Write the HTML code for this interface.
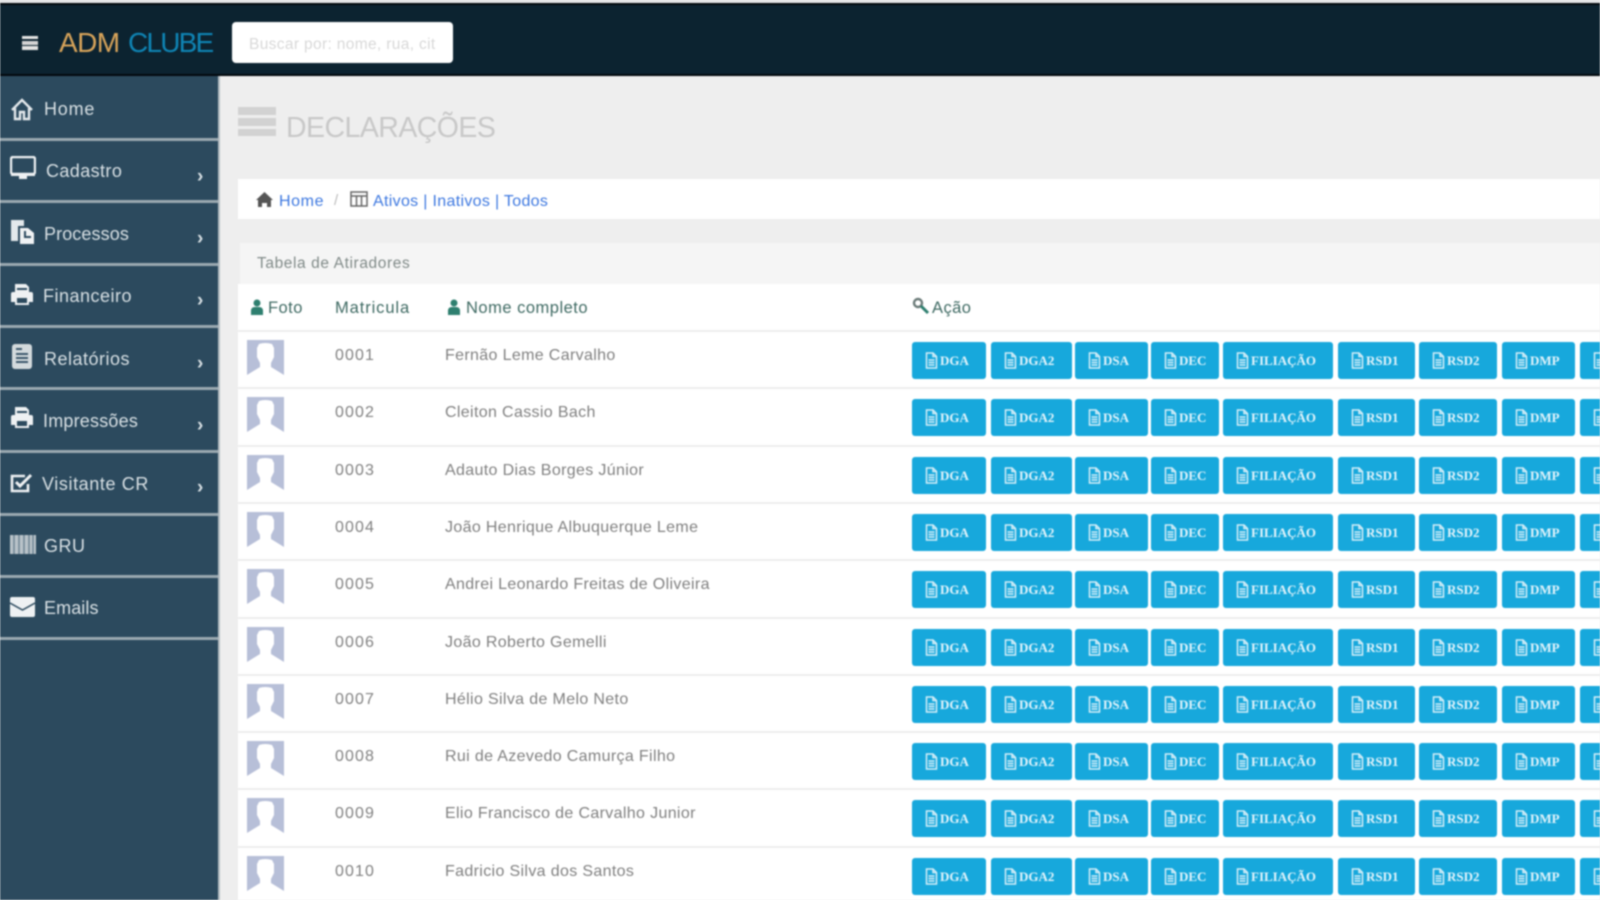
<!DOCTYPE html>
<html lang="pt"><head><meta charset="utf-8"><title>Declarações</title>
<style>
*{box-sizing:border-box}
html,body{margin:0;padding:0;width:1600px;height:900px;overflow:hidden;background:#eee}
#p{position:relative;width:1600px;height:900px;overflow:hidden;font-family:"Liberation Sans",sans-serif;filter:blur(.8px);background:#eee}
.a{position:absolute;white-space:nowrap}
#top{left:0;top:3px;width:1600px;height:73px;background:#0c2330;border-top:2px solid #02090e;border-bottom:2px solid #02090e}
#side{left:0;top:76px;width:220px;height:824px;background:#2c4a5e;border-right:2px solid #b4bdc2}
.d{position:absolute;left:0;width:218px;height:3px;background:#9aa8b0}
.m{position:absolute;color:#d8e0e4;font-size:18px;line-height:22px}
.ch{position:absolute;left:197px;color:#d8e0e4;font-size:19px;font-weight:bold;line-height:16px}
.ic{position:absolute;left:10px}
#crumb{left:238px;top:179px;width:1362px;height:40px;background:#fff}
#ph{left:240px;top:243px;width:1360px;height:41px;background:#f5f5f5}
#tb{left:238px;top:284px;width:1362px;height:616px;background:#fff}
.h{position:absolute;top:297px;font-size:16.5px;line-height:22px;color:#3f6a63;letter-spacing:.45px}
.r{position:absolute;left:238px;width:1362px;height:57px;border-top:2px solid #eee}
.r svg.av{position:absolute;left:9px;top:8px;width:37px;height:35px}
.r .n,.r .t{position:absolute;top:14px;font-size:16px;line-height:20px;color:#808080;white-space:nowrap;letter-spacing:.35px}
.r .n{left:97px;letter-spacing:1.1px}.r .t{left:207px}
.r b{position:absolute;top:10px;height:37px;background:#17a8dc;border-radius:3px;color:#e4f4fb;font:bold 13px/37px "Liberation Serif",serif;text-align:left;white-space:nowrap;overflow:hidden;padding-left:13px}
.r b svg{width:13px;height:17px;vertical-align:-4px;margin-right:2px}
.r b:nth-of-type(1){left:674px;width:74px}
.r b:nth-of-type(2){left:753px;width:81px}
.r b:nth-of-type(3){left:837px;width:73px}
.r b:nth-of-type(4){left:913px;width:68px}
.r b:nth-of-type(5){left:985px;width:110px}
.r b:nth-of-type(6){left:1100px;width:77px}
.r b:nth-of-type(7){left:1181px;width:78px}
.r b:nth-of-type(8){left:1264px;width:73px}
.r b:nth-of-type(9){left:1342px;width:40px}
a{color:#3d78e0;text-decoration:none}
</style></head><body>
<svg width="0" height="0" style="position:absolute"><defs>
<symbol id="av" viewBox="0 0 37 35"><rect width="37" height="35" fill="#b7bfd8"/><path d="M12 4Q18 2 25 4L27 8V17L24 23V27L37 35H0L13 27V23L10 17V8Z" fill="#fff"/></symbol>
<symbol id="dc" viewBox="0 0 13 17"><path d="M1.5 1h6.5l3.500 3.500V16h-10zM8 1v3.500h3.500M3.500 8h6M3.500 10.500h6M3.500 13h6" fill="none" stroke="#d6eef8" stroke-width="1.500"/></symbol>
<symbol id="pr" viewBox="0 0 14 16"><circle cx="7" cy="4" r="3.500" fill="#2e7f6f"/><path d="M1 16v-4q0-4 4-4h4q4 0 4 4v4z" fill="#2e7f6f"/></symbol>
</defs></svg>
<div id="p">
<div class="a" style="left:0;top:0;width:1600px;height:3px;background:#e4e6e7"></div>
<div class="a" id="top"></div>
<div class="a" style="left:22px;top:36px;width:16px;height:3px;background:#e4e4e4"></div>
<div class="a" style="left:22px;top:41px;width:16px;height:4px;background:#d4d4d4"></div>
<div class="a" style="left:22px;top:46px;width:16px;height:4px;background:#e4e4e4"></div>
<div class="a" style="left:59px;top:26px;font-size:28px;line-height:34px;letter-spacing:-.6px;color:#d8a45a">ADM</div>
<div class="a" style="left:128px;top:26px;font-size:28px;line-height:34px;letter-spacing:-1.8px;color:#0f84b4">CLUBE</div>
<div class="a" style="left:232px;top:22px;width:221px;height:41px;background:#fff;border-radius:4px"></div>
<div class="a" style="left:249px;top:35px;font-size:15.5px;line-height:20px;color:#d8d8d8;letter-spacing:.35px">Buscar por: nome, rua, cit</div>

<div class="a" id="side">
<div class="d" style="top:62px"></div><div class="d" style="top:124px"></div><div class="d" style="top:187px"></div><div class="d" style="top:249px"></div><div class="d" style="top:311px"></div><div class="d" style="top:374px"></div><div class="d" style="top:437px"></div><div class="d" style="top:499px"></div><div class="d" style="top:561px"></div>

<svg class="ic" style="top:21px" width="24" height="24" viewBox="0 0 24 24"><path d="M2 13L12 3l10 10M5 11v11h5v-7h4v7h5V11" fill="none" stroke="#e4e9ec" stroke-width="2.400"/></svg>
<div class="m" style="left:44px;top:22px;letter-spacing:.8px">Home</div>

<svg class="ic" style="top:80px" width="26" height="24" viewBox="0 0 26 24"><rect x="1" y="1" width="24" height="17" rx="2" fill="none" stroke="#eef1f3" stroke-width="2.400"/><path d="M1 17h24v3H1zM9 20h8v3H9z" fill="#eef1f3"/></svg>
<div class="m" style="left:46px;top:84px;letter-spacing:.4px">Cadastro</div><div class="ch" style="top:93px">›</div>

<svg class="ic" style="top:142px" width="26" height="27" viewBox="0 0 26 27"><path d="M1 2h13v6H8v15H1z" fill="#e4e9ec"/><path d="M10 10h8l6 5v11H10z" fill="#f0f2f4"/><path d="M15 13v6h6" fill="none" stroke="#2c4a5e" stroke-width="2"/></svg>
<div class="m" style="left:44px;top:147px;letter-spacing:.1px">Processos</div><div class="ch" style="top:155px">›</div>

<svg class="ic" style="top:206px" width="24" height="24" viewBox="0 0 24 24"><path d="M5 10V2h11l3 3v5h2q2 0 2 2v8h-4v3H5v-3H1v-8q0-2 2-2z" fill="#eef1f3"/><path d="M7 16h10v5H7z" fill="#2c4a5e"/><path d="M7 7h10" stroke="#2c4a5e" stroke-width="2"/></svg>
<div class="m" style="left:43px;top:209px;letter-spacing:.5px">Financeiro</div><div class="ch" style="top:217px">›</div>

<svg class="ic" style="top:267px" width="24" height="27" viewBox="0 0 24 27"><rect x="2" y="1" width="20" height="25" rx="3" fill="#d3dadd"/><path d="M6 6h6M6 11h12M6 15h12M6 19h12" stroke="#3a5669" stroke-width="2"/></svg>
<div class="m" style="left:44px;top:272px;letter-spacing:.5px">Relatórios</div><div class="ch" style="top:280px">›</div>

<svg class="ic" style="top:329px" width="24" height="24" viewBox="0 0 24 24"><path d="M5 10V2h11l3 3v5h2q2 0 2 2v8h-4v3H5v-3H1v-8q0-2 2-2z" fill="#eef1f3"/><path d="M7 16h10v5H7z" fill="#2c4a5e"/><path d="M7 7h10" stroke="#2c4a5e" stroke-width="2"/></svg>
<div class="m" style="left:43px;top:334px;letter-spacing:.2px">Impressões</div><div class="ch" style="top:342px">›</div>

<svg class="ic" style="top:396px" width="24" height="22" viewBox="0 0 24 22"><path d="M18 12v7H2V4h13" fill="none" stroke="#eef1f3" stroke-width="2.600"/><path d="M6 10l4 4 11-11" fill="none" stroke="#eef1f3" stroke-width="3"/></svg>
<div class="m" style="left:42px;top:397px;letter-spacing:.6px">Visitante CR</div><div class="ch" style="top:404px">›</div>

<svg class="ic" style="top:459px" width="26" height="19" viewBox="0 0 26 19"><rect width="26" height="19" fill="#b9c3c9"/><path d="M4 0v19M9 0v19M14 0v19M19 0v19M23 0v19" stroke="#6f8594" stroke-width="1.500"/></svg>
<div class="m" style="left:44px;top:459px;letter-spacing:.5px">GRU</div>

<svg class="ic" style="top:521px" width="25" height="20" viewBox="0 0 25 20"><rect width="25" height="20" rx="2" fill="#eef1f3"/><path d="M0 6l12.500 7L25 6" fill="none" stroke="#2c4a5e" stroke-width="1.500"/></svg>
<div class="m" style="left:44px;top:521px;letter-spacing:.1px">Emails</div>
</div>

<svg class="a" style="left:238px;top:107px" width="38" height="30" viewBox="0 0 38 30"><path d="M0 0h38v8H0zM0 11h38v8H0zM0 22h38v7H0z" fill="#d2d2d2"/></svg>
<div class="a" style="left:286px;top:110px;font-size:28.500px;line-height:36px;color:#c8c8c8;letter-spacing:-.55px">DECLARAÇÕES</div>

<div class="a" id="crumb"></div>
<svg class="a" style="left:256px;top:192px" width="17" height="15" viewBox="0 0 17 15"><path d="M0 8l8.500-8L17 8h-2v7h-4v-4H6v4H2V8z" fill="#555"/></svg>
<div class="a" style="left:279px;top:192px;font-size:16px;line-height:20px;letter-spacing:.6px"><a>Home</a></div>
<div class="a" style="left:334px;top:191px;font-size:15px;line-height:20px;color:#bbb">/</div>
<svg class="a" style="left:350px;top:191px" width="18" height="16" viewBox="0 0 18 16"><path d="M1 1h16v14H1zM1 5h16M6.500 5v10M11.500 5v10" fill="none" stroke="#666" stroke-width="1.500"/></svg>
<div class="a" style="left:373px;top:192px;font-size:16px;line-height:20px;letter-spacing:.32px;color:#3d78e0">Ativos | Inativos | Todos</div>

<div class="a" id="ph"></div>
<div class="a" style="left:257px;top:254px;font-size:15.500px;line-height:20px;color:#808a88;letter-spacing:.6px">Tabela de Atiradores</div>
<div class="a" id="tb"></div>

<svg class="a" style="left:250px;top:298px" width="14" height="18" viewBox="0 0 14 16"><use href="#pr"/></svg>
<div class="h" style="left:268px">Foto</div>
<div class="h" style="left:335px;letter-spacing:.9px">Matricula</div>
<svg class="a" style="left:447px;top:298px" width="14" height="18" viewBox="0 0 14 16"><use href="#pr"/></svg>
<div class="h" style="left:466px;letter-spacing:.5px">Nome completo</div>
<svg class="a" style="left:912px;top:297px" width="18" height="18" viewBox="0 0 18 18"><circle cx="6" cy="6" r="4" fill="none" stroke="#6a7a78" stroke-width="2.400"/><path d="M9 9l7 7" stroke="#2e7f6f" stroke-width="3"/></svg>
<div class="h" style="left:932px">Ação</div>

<div class="r" style="top:330px"><svg class="av"><use href="#av"/></svg><span class="n">0001</span><span class="t">Fernão Leme Carvalho</span><b><svg><use href="#dc"/></svg>DGA</b><b><svg><use href="#dc"/></svg>DGA2</b><b><svg><use href="#dc"/></svg>DSA</b><b><svg><use href="#dc"/></svg>DEC</b><b><svg><use href="#dc"/></svg>FILIAÇÃO</b><b><svg><use href="#dc"/></svg>RSD1</b><b><svg><use href="#dc"/></svg>RSD2</b><b><svg><use href="#dc"/></svg>DMP</b><b><svg><use href="#dc"/></svg>DM</b></div>
<div class="r" style="top:387.300px"><svg class="av"><use href="#av"/></svg><span class="n">0002</span><span class="t">Cleiton Cassio Bach</span><b><svg><use href="#dc"/></svg>DGA</b><b><svg><use href="#dc"/></svg>DGA2</b><b><svg><use href="#dc"/></svg>DSA</b><b><svg><use href="#dc"/></svg>DEC</b><b><svg><use href="#dc"/></svg>FILIAÇÃO</b><b><svg><use href="#dc"/></svg>RSD1</b><b><svg><use href="#dc"/></svg>RSD2</b><b><svg><use href="#dc"/></svg>DMP</b><b><svg><use href="#dc"/></svg>DM</b></div>
<div class="r" style="top:444.600px"><svg class="av"><use href="#av"/></svg><span class="n">0003</span><span class="t">Adauto Dias Borges Júnior</span><b><svg><use href="#dc"/></svg>DGA</b><b><svg><use href="#dc"/></svg>DGA2</b><b><svg><use href="#dc"/></svg>DSA</b><b><svg><use href="#dc"/></svg>DEC</b><b><svg><use href="#dc"/></svg>FILIAÇÃO</b><b><svg><use href="#dc"/></svg>RSD1</b><b><svg><use href="#dc"/></svg>RSD2</b><b><svg><use href="#dc"/></svg>DMP</b><b><svg><use href="#dc"/></svg>DM</b></div>
<div class="r" style="top:501.900px"><svg class="av"><use href="#av"/></svg><span class="n">0004</span><span class="t">João Henrique Albuquerque Leme</span><b><svg><use href="#dc"/></svg>DGA</b><b><svg><use href="#dc"/></svg>DGA2</b><b><svg><use href="#dc"/></svg>DSA</b><b><svg><use href="#dc"/></svg>DEC</b><b><svg><use href="#dc"/></svg>FILIAÇÃO</b><b><svg><use href="#dc"/></svg>RSD1</b><b><svg><use href="#dc"/></svg>RSD2</b><b><svg><use href="#dc"/></svg>DMP</b><b><svg><use href="#dc"/></svg>DM</b></div>
<div class="r" style="top:559.200px"><svg class="av"><use href="#av"/></svg><span class="n">0005</span><span class="t">Andrei Leonardo Freitas de Oliveira</span><b><svg><use href="#dc"/></svg>DGA</b><b><svg><use href="#dc"/></svg>DGA2</b><b><svg><use href="#dc"/></svg>DSA</b><b><svg><use href="#dc"/></svg>DEC</b><b><svg><use href="#dc"/></svg>FILIAÇÃO</b><b><svg><use href="#dc"/></svg>RSD1</b><b><svg><use href="#dc"/></svg>RSD2</b><b><svg><use href="#dc"/></svg>DMP</b><b><svg><use href="#dc"/></svg>DM</b></div>
<div class="r" style="top:616.500px"><svg class="av"><use href="#av"/></svg><span class="n">0006</span><span class="t">João Roberto Gemelli</span><b><svg><use href="#dc"/></svg>DGA</b><b><svg><use href="#dc"/></svg>DGA2</b><b><svg><use href="#dc"/></svg>DSA</b><b><svg><use href="#dc"/></svg>DEC</b><b><svg><use href="#dc"/></svg>FILIAÇÃO</b><b><svg><use href="#dc"/></svg>RSD1</b><b><svg><use href="#dc"/></svg>RSD2</b><b><svg><use href="#dc"/></svg>DMP</b><b><svg><use href="#dc"/></svg>DM</b></div>
<div class="r" style="top:673.800px"><svg class="av"><use href="#av"/></svg><span class="n">0007</span><span class="t">Hélio Silva de Melo Neto</span><b><svg><use href="#dc"/></svg>DGA</b><b><svg><use href="#dc"/></svg>DGA2</b><b><svg><use href="#dc"/></svg>DSA</b><b><svg><use href="#dc"/></svg>DEC</b><b><svg><use href="#dc"/></svg>FILIAÇÃO</b><b><svg><use href="#dc"/></svg>RSD1</b><b><svg><use href="#dc"/></svg>RSD2</b><b><svg><use href="#dc"/></svg>DMP</b><b><svg><use href="#dc"/></svg>DM</b></div>
<div class="r" style="top:731.100px"><svg class="av"><use href="#av"/></svg><span class="n">0008</span><span class="t">Rui de Azevedo Camurça Filho</span><b><svg><use href="#dc"/></svg>DGA</b><b><svg><use href="#dc"/></svg>DGA2</b><b><svg><use href="#dc"/></svg>DSA</b><b><svg><use href="#dc"/></svg>DEC</b><b><svg><use href="#dc"/></svg>FILIAÇÃO</b><b><svg><use href="#dc"/></svg>RSD1</b><b><svg><use href="#dc"/></svg>RSD2</b><b><svg><use href="#dc"/></svg>DMP</b><b><svg><use href="#dc"/></svg>DM</b></div>
<div class="r" style="top:788.400px"><svg class="av"><use href="#av"/></svg><span class="n">0009</span><span class="t">Elio Francisco de Carvalho Junior</span><b><svg><use href="#dc"/></svg>DGA</b><b><svg><use href="#dc"/></svg>DGA2</b><b><svg><use href="#dc"/></svg>DSA</b><b><svg><use href="#dc"/></svg>DEC</b><b><svg><use href="#dc"/></svg>FILIAÇÃO</b><b><svg><use href="#dc"/></svg>RSD1</b><b><svg><use href="#dc"/></svg>RSD2</b><b><svg><use href="#dc"/></svg>DMP</b><b><svg><use href="#dc"/></svg>DM</b></div>
<div class="r" style="top:845.700px"><svg class="av"><use href="#av"/></svg><span class="n">0010</span><span class="t">Fadricio Silva dos Santos</span><b><svg><use href="#dc"/></svg>DGA</b><b><svg><use href="#dc"/></svg>DGA2</b><b><svg><use href="#dc"/></svg>DSA</b><b><svg><use href="#dc"/></svg>DEC</b><b><svg><use href="#dc"/></svg>FILIAÇÃO</b><b><svg><use href="#dc"/></svg>RSD1</b><b><svg><use href="#dc"/></svg>RSD2</b><b><svg><use href="#dc"/></svg>DMP</b><b><svg><use href="#dc"/></svg>DM</b></div>
</div>
</body></html>
